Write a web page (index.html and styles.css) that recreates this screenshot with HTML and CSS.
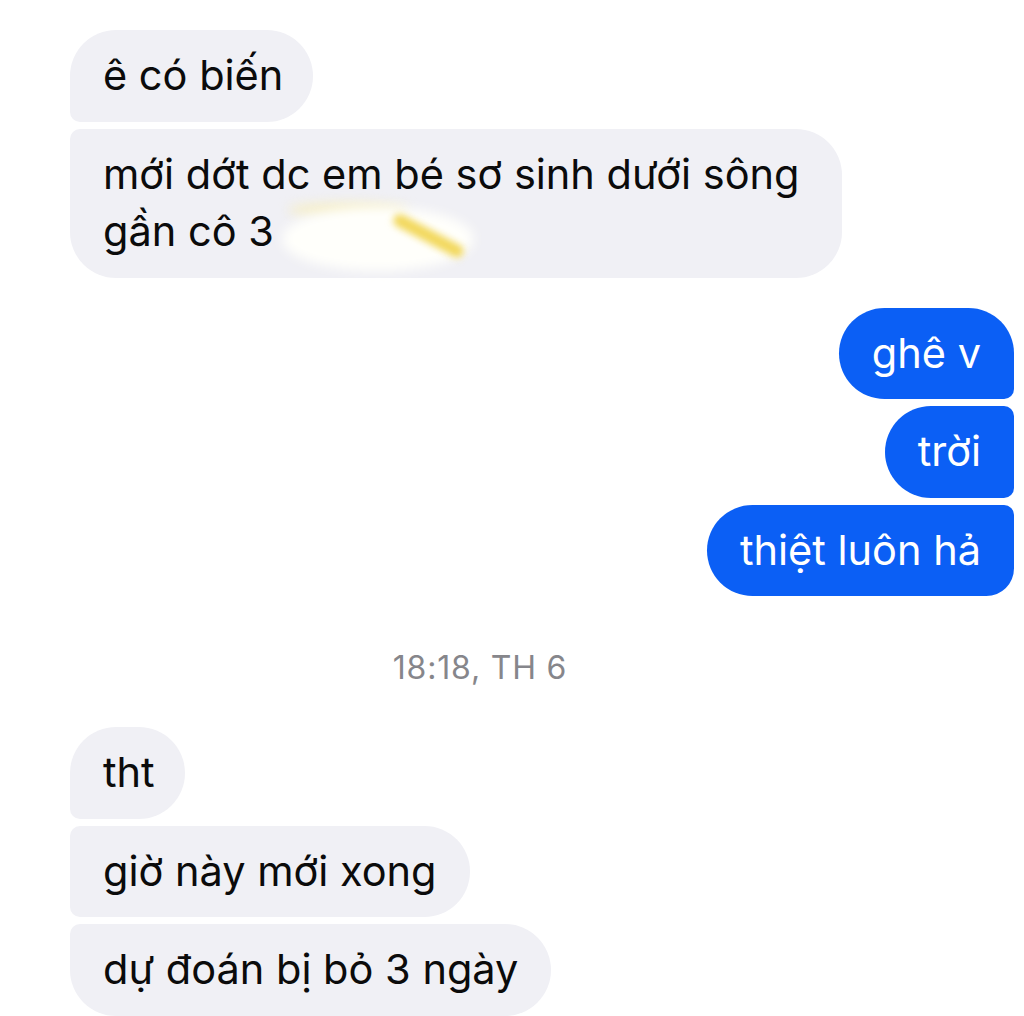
FILE: index.html
```html
<!DOCTYPE html>
<html lang="vi">
<head>
<meta charset="utf-8">
<link rel="stylesheet" href="styles.css">
</head>
<body>
<div class="chat">
  <div class="group in">
    <div class="msg first">ê có biến</div>
    <div class="msg last wide">mới dớt dc em bé sơ sinh dưới sông<br>gần cô 3<span class="smudge"><span class="haze"></span><span class="smear"></span><span class="stroke"></span></span></div>
  </div>
  <div class="group out">
    <div class="msg first">ghê v</div>
    <div class="msg mid">trời</div>
    <div class="msg last">thiệt luôn hả</div>
  </div>
  <div class="stamp">18:18, TH 6</div>
  <div class="group in">
    <div class="msg first">tht</div>
    <div class="msg mid">giờ này mới xong</div>
    <div class="msg last">dự đoán bị bỏ 3 ngày</div>
  </div>
</div>
</body>
</html>
```
FILE: styles.css
```css
html, body {
  margin: 0;
  padding: 0;
  background: #ffffff;
}
body {
  font-family: Inter, "Liberation Sans", Arial, sans-serif;
  width: 1024px;
  height: 1016px;
  overflow: hidden;
}
.chat {
  display: flex;
  flex-direction: column;
  padding: 30px 10px 0 70px;
}
.group {
  display: flex;
  flex-direction: column;
  gap: 7px;
}
.group.in { align-items: flex-start; }
.group.out { align-items: flex-end; margin-top: 30px; }
.msg {
  position: relative;
  font-size: 41.5px;
  line-height: 57.5px;
  padding: 17px 33px;
  border-radius: 46px;
  white-space: nowrap;
}
.in .msg {
  background: #f0f0f5;
  color: #0b0b0b;
}
.out .msg {
  background: #0b5ff5;
  color: #ffffff;
}
.in .first { border-bottom-left-radius: 10px; padding-right: 30px; }
.in .mid { border-top-left-radius: 10px; border-bottom-left-radius: 10px; }
.in .last { border-top-left-radius: 10px; }
.out .first { border-bottom-right-radius: 10px; }
.out .mid { border-top-right-radius: 10px; border-bottom-right-radius: 10px; }
.out .last { border-top-right-radius: 10px; border-bottom-right-radius: 28px; }
.msg.wide { padding-right: 42px; }
.stamp {
  align-self: center;
  margin: 52px 124px 39px 0;
  font-size: 32px;
  letter-spacing: 0.8px;
  line-height: 40px;
  color: #86868b;
}
.smudge {
  position: absolute;
  left: 212px;
  top: 70px;
  width: 200px;
  height: 80px;
}
.haze {
  position: absolute;
  left: 6px;
  top: 4px;
  width: 120px;
  height: 14px;
  border-radius: 50%;
  background: #f7efc4;
  filter: blur(6px);
}
.smear {
  position: absolute;
  left: 0;
  top: 8px;
  width: 192px;
  height: 64px;
  border-radius: 50%;
  background: #fffffb;
  filter: blur(6px);
}
.stroke {
  position: absolute;
  left: 112px;
  top: 12px;
  width: 78px;
  height: 13px;
  border-radius: 7px;
  background: #f2d85c;
  transform: rotate(28deg);
  transform-origin: left center;
  filter: blur(3.5px);
}
```
